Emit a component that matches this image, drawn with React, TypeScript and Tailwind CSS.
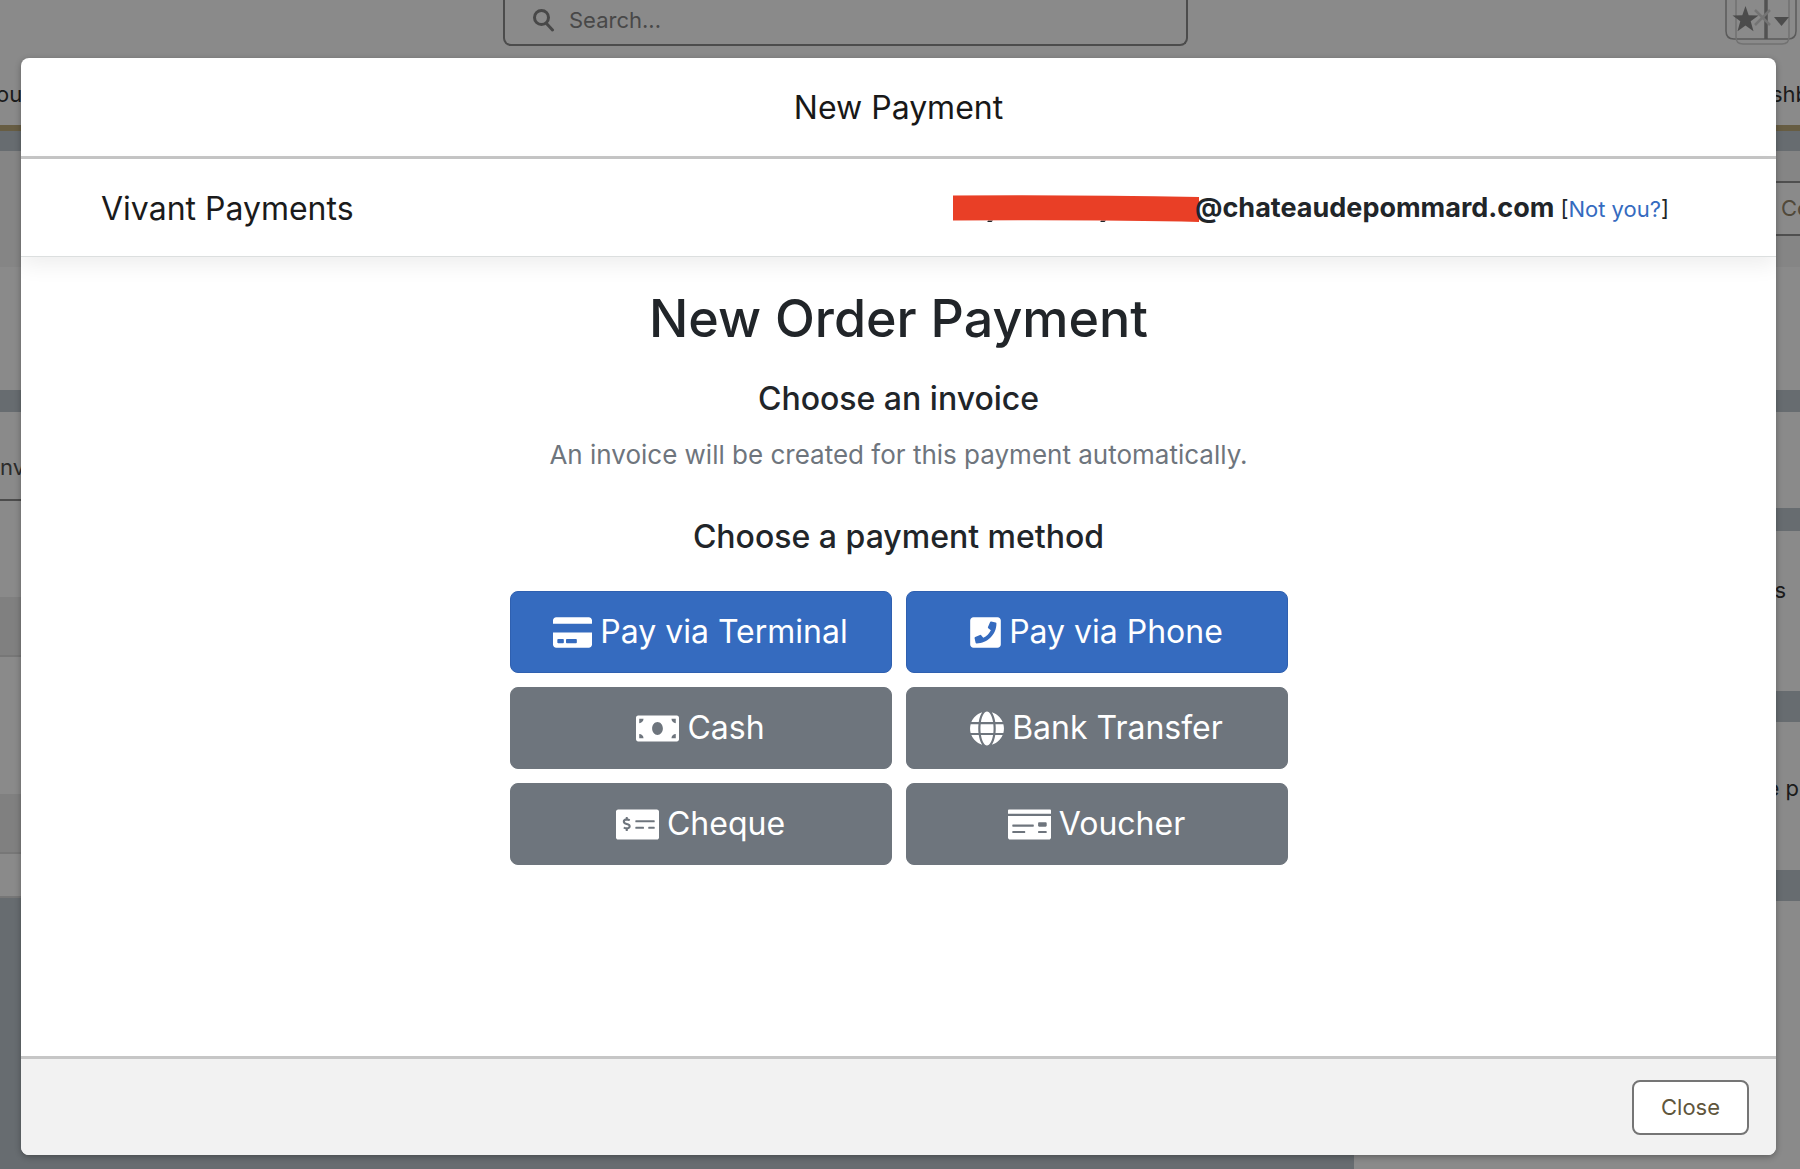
import type { ReactNode } from 'react';
import {
  FaCreditCard,
  FaGlobe,
  FaMoneyBill,
  FaMoneyCheck,
  FaMoneyCheckAlt,
  FaPhoneSquare,
} from 'react-icons/fa';

function PayButton({ icon, label, primary }: { icon: ReactNode; label: string; primary?: boolean }) {
  return (
    <button
      type="button"
      className={
        'flex h-[82px] items-center justify-center gap-2 rounded-lg border text-[32px] text-white ' +
        (primary ? 'border-[#2f60b0] bg-[#356bbf]' : 'border-[#6e757d] bg-[#6e757d]')
      }
    >
      {icon}
      {label}
    </button>
  );
}

function TopBar() {
  return (
    <header className="h-[131px] border-b-6 border-[#675d43] bg-[#8a8a8a]">
      <div className="grid h-[46px] grid-cols-[28%_38%_1fr]">
        <div />
        <label className="-ml-px flex items-center rounded-b-lg border-2 border-t-0 border-[#4c4c4c] pb-1 pl-7">
          <svg className="h-6 w-6 text-[#484848]" viewBox="0 0 24 24" fill="none" stroke="currentColor" strokeWidth="3">
            <circle cx="8.5" cy="9.5" r="7" />
            <path d="M13.500 15.500 19.500 22" strokeLinecap="round" />
          </svg>
          <input
            type="text"
            aria-label="Search"
            placeholder="Search..."
            className="ml-3 flex-1 bg-transparent text-[22px] outline-none placeholder:text-[#484848]"
          />
        </label>
        <div className="flex justify-end pr-[3px]">
          <svg className="h-[46px] w-[72px]" viewBox="0 0 72 46" fill="none">
            <path d="M1 0v31q0 8 8 8h54q8 0 8-8V0" stroke="#5b5b5b" strokeWidth="1.5" />
            <path d="M41 0v39" stroke="#525252" strokeWidth="3.5" />
            <path d="M11 0v37q0 7 7 7h39q7 0 7-7V0" stroke="#727272" strokeWidth="1.5" />
            <path d="m20.500 6 3.200 9.200 9.800.2-7.800 5.900 2.800 9.900-8-5.700-8 5.700 2.800-9.900-7.800-5.900 9.800-.2z" fill="#4c4c4c" />
            <path d="m30 10 15 15M45 10 30 25" stroke="#747474" strokeWidth="2.500" />
            <path d="M49 17h15l-7.500 9z" fill="#4c4c4c" />
          </svg>
        </div>
      </div>
      <nav className="flex h-[79px] items-center justify-between pt-[18px] text-[22px] text-[#1b1b1b]">
        <span className="-ml-1">ou</span>
        <span className="w-[29px]">shb</span>
      </nav>
    </header>
  );
}

function Background() {
  return (
    <div className="flex min-h-screen flex-col bg-[#676c70]">
      <TopBar />
      <div className="grid flex-1 grid-cols-[1354fr_446fr] pt-5">
        <div>
          <div className="h-[116px] bg-[#858585]" />
          <div className="h-[123px] bg-[#8a8a8a]" />
          <div className="mt-[22px] flex h-[89px] items-center border-b-2 border-[#4c4c4c] bg-[#8a8a8a] pt-6 text-[22px] text-[#2b2b2b]">
            nv
          </div>
          <div className="h-24 bg-[#8a8a8a]" />
          <div className="h-[60px] border-b-2 border-[#777777] bg-[#808080]" />
          <div className="h-[137px] bg-[#8a8a8a]" />
          <div className="h-[60px] border-b-2 border-[#777777] bg-[#808080]" />
          <div className="h-11 border-b-2 border-[#777777] bg-[#8a8a8a]" />
        </div>
        <div className="flex flex-col overflow-hidden text-[22px] text-[#1b1b1b]">
          <div className="h-[116px] bg-[#858585] pt-[30px]">
            <div className="flex h-[55px] items-center justify-end border-y-2 border-[#4f4f4f] bg-[#8a8a8a] text-[#51493a]">
              <span className="w-[19px] whitespace-nowrap">Co</span>
            </div>
          </div>
          <div className="h-[123px] bg-[#8a8a8a]" />
          <div className="mt-[22px] h-24 bg-[#8a8a8a]" />
          <div className="mt-[23px] flex h-40 justify-end bg-[#8a8a8a] pt-[43px] pr-3.5">s</div>
          <div className="mt-[31px] flex h-[148px] justify-end bg-[#8a8a8a] pt-[50px] pr-px">e p</div>
          <div className="mt-[31px] flex-1 bg-[#8a8a8a]" />
        </div>
      </div>
    </div>
  );
}

function PaymentModal() {
  return (
    <section
      role="dialog"
      aria-modal="true"
      aria-labelledby="modal-title"
      className="flex flex-1 flex-col overflow-hidden rounded-lg bg-white text-[#212529] shadow-[0_2px_6px_rgba(0,0,0,0.3)]"
    >
      <header className="flex h-[101px] items-center justify-center border-b-3 border-[#c6c6c6] pt-0.5">
        <h2 id="modal-title" className="text-[32px] text-[#181818]">New Payment</h2>
      </header>

      <div className="flex h-[98px] items-center justify-between border-b border-[#dcdfdf] pt-0.5 pr-[107px] pl-20 shadow-[0_8px_20px_rgba(0,0,0,0.07)]">
        <span className="text-[32px] text-[#1b1b1b]">Vivant Payments</span>
        <div className="flex items-baseline">
          <svg className="h-[27px] w-[246px] self-center" viewBox="0 0 246 27" preserveAspectRatio="none">
            <path d="M35 25.500h5l-2 2h-4zM148 25.500h5l-2 2h-4z" fill="#212529" />
            <path d="M0 .5Q120-.5 246 2v25Q150 24.500 0 25.500z" fill="#e93f26" />
          </svg>
          <strong className="-ml-1 text-[27px] font-bold">@chateaudepommard.com</strong>
          <span className="ml-1.5 text-[22px]">
            [<a href="#switch" className="text-[#356bbf]">Not you?</a>]
          </span>
        </div>
      </div>

      <main className="flex flex-1 flex-col items-center text-center">
        <h1 className="mt-7 text-[52px] leading-[68px] font-medium">New Order Payment</h1>
        <h3 className="mt-[26px] text-[32px] leading-10 font-medium">Choose an invoice</h3>
        <p className="mt-4 text-[26px] leading-10 text-[#6e757d]">
          An invoice will be created for this payment automatically.
        </p>
        <h3 className="mt-[42px] text-[32px] leading-10 font-medium">Choose a payment method</h3>
        <div className="mt-[34px] grid w-full max-w-[778px] grid-cols-2 gap-3.5">
          <PayButton primary icon={<FaCreditCard className="h-[35px] w-[39px]" />} label="Pay via Terminal" />
          <PayButton primary icon={<FaPhoneSquare className="h-[35px] w-[31px]" />} label="Pay via Phone" />
          <PayButton icon={<FaMoneyBill className="h-[35px] w-[43px]" />} label="Cash" />
          <PayButton icon={<FaGlobe className="h-[35px] w-[34px]" />} label="Bank Transfer" />
          <PayButton icon={<FaMoneyCheckAlt className="h-[35px] w-[43px]" />} label="Cheque" />
          <PayButton icon={<FaMoneyCheck className="h-[35px] w-[43px]" />} label="Voucher" />
        </div>
      </main>

      <footer className="flex h-[99px] items-center justify-end border-t-3 border-[#c6c6c6] bg-[#f2f2f2] pr-[27px]">
        <button
          type="button"
          className="h-[55px] w-[117px] rounded-lg border-2 border-[#757575] bg-white text-[22px] text-[#5f563c]"
        >
          Close
        </button>
      </footer>
    </section>
  );
}

export default function App() {
  return (
    <div className="relative min-h-screen overflow-hidden font-['Inter',sans-serif]">
      <Background />
      <div className="absolute inset-0 flex pt-[58px] pr-6 pb-3.5 pl-[21px]">
        <PaymentModal />
      </div>
    </div>
  );
}
